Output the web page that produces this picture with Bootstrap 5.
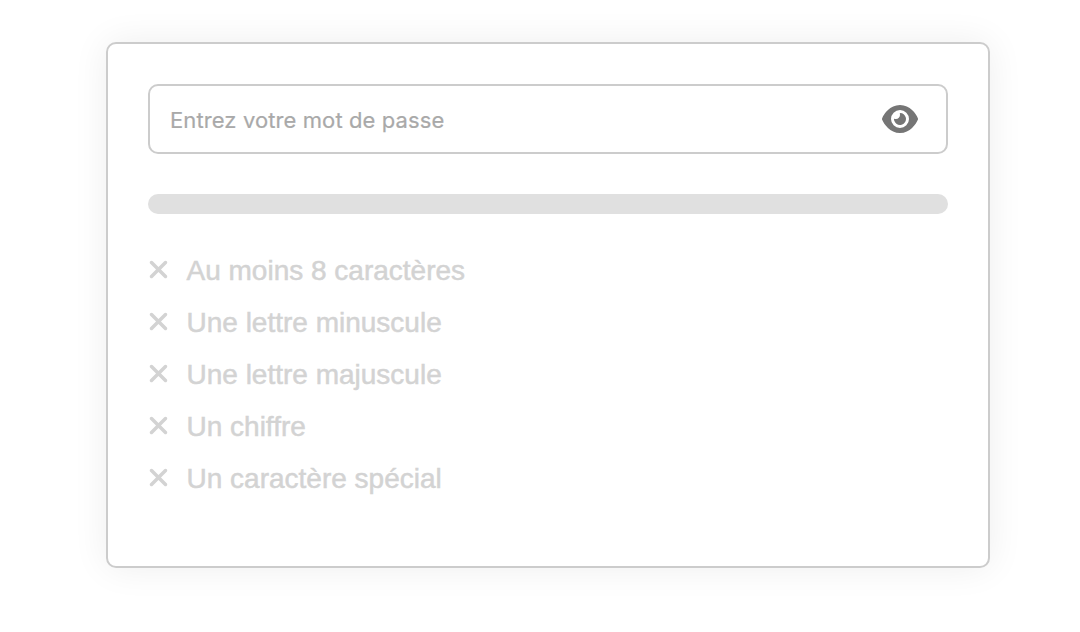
<!DOCTYPE html>
<html lang="fr">
<head>
<meta charset="utf-8">
<meta name="viewport" content="width=device-width, initial-scale=1">
<title>Mot de passe</title>
<link href="https://cdn.jsdelivr.net/npm/bootstrap@5.3.0/dist/css/bootstrap.min.css" rel="stylesheet">
<style>
  body { font-family: "Liberation Sans", Arial, sans-serif; background: #fff; }
  .pw-card { width: 884px; height: 526px; margin: 42px 0 0 106px; padding: 40px; border: 2px solid #ccc; border-radius: 10px; box-shadow: 0 0 36px rgba(0,0,0,.07); }
  .pw-field { height: 70px; border: 2px solid #ccc; border-radius: 10px; padding: 0 28px 0 20px; }
  .pw-field .form-control { font-family: Inter, sans-serif; font-size: 22px; letter-spacing: .1px; height: 66px; padding: 2px 0 0; }
  .pw-field .form-control:focus { box-shadow: none; }
  .pw-field .form-control::placeholder { color: #a9a9a9; opacity: 1; -webkit-text-stroke: .2px #a9a9a9; }
  .eye-btn { color: #757575; line-height: 0; }
  .pw-meter { height: 20px; border-radius: 10px; background: #e0e0e0; margin: 40px 0 30px; }
  .pw-rules { color: #d3d3d3; font-size: 28px; line-height: 52px; }
  .pw-rules li { height: 52px; gap: 17.5px; }
  .pw-rules span { padding-top: 2px; -webkit-text-stroke: .5px #d3d3d3; }
  .pw-rules svg { margin-top: -2px; transform: translateY(.5px); }
</style>
<script src="https://cdn.jsdelivr.net/npm/bootstrap@5.3.0/dist/js/bootstrap.bundle.min.js"></script>
</head>
<body>
<svg class="d-none">
  <symbol id="xmark" viewBox="0 0 384 512"><path fill="currentColor" d="M342.6 150.6c12.5-12.5 12.5-32.8 0-45.3s-32.8-12.5-45.3 0L192 210.7 86.6 105.4c-12.5-12.5-32.8-12.5-45.3 0s-12.5 32.8 0 45.3L146.7 256 41.4 361.4c-12.5 12.5-12.5 32.8 0 45.3s32.8 12.5 45.3 0L192 301.3 297.4 406.6c12.5 12.5 32.8 12.5 45.3 0s12.5-32.8 0-45.3L237.3 256 342.6 150.6z"/></symbol>
</svg>
<div class="min-vh-100 d-flex align-items-start">
<main class="card pw-card">
  <div class="pw-field d-flex align-items-center">
    <input class="form-control border-0 bg-transparent" type="text" placeholder="Entrez votre mot de passe" aria-label="Mot de passe">
    <button class="btn p-0 border-0 eye-btn" type="button" aria-label="Afficher">
      <svg width="36" height="32" viewBox="0 0 576 512"><path fill="currentColor" d="M288 32c-80.8 0-145.5 36.8-192.6 80.6C48.6 156 17.3 208 2.5 243.7c-3.3 7.9-3.3 16.7 0 24.6C17.3 304 48.6 356 95.4 399.4C142.5 443.2 207.2 480 288 480s145.5-36.8 192.6-80.6c46.8-43.5 78.1-95.4 93-131.1c3.3-7.9 3.3-16.7 0-24.6c-14.9-35.7-46.2-87.7-93-131.1C433.5 68.8 368.8 32 288 32zM144 256a144 144 0 1 1 288 0 144 144 0 1 1 -288 0zm144-64c0 35.3-28.7 64-64 64c-7.1 0-13.9-1.2-20.3-3.3c-5.5-1.8-11.9 1.6-11.7 7.4c.3 6.9 1.3 13.8 3.2 20.7c13.7 51.2 66.4 81.6 117.6 67.9s81.6-66.4 67.9-117.6c-11.1-41.5-47.8-69.4-88.6-71.1c-5.8-.2-9.2 6.1-7.4 11.7c2.1 6.4 3.3 13.2 3.3 20.3z"/></svg>
    </button>
  </div>
  <div class="pw-meter"></div>
  <ul class="pw-rules list-unstyled mb-0">
    <li class="d-flex align-items-center"><svg width="21" height="28"><use href="#xmark"/></svg><span>Au moins 8 caractères</span></li>
    <li class="d-flex align-items-center"><svg width="21" height="28"><use href="#xmark"/></svg><span>Une lettre minuscule</span></li>
    <li class="d-flex align-items-center"><svg width="21" height="28"><use href="#xmark"/></svg><span>Une lettre majuscule</span></li>
    <li class="d-flex align-items-center"><svg width="21" height="28"><use href="#xmark"/></svg><span>Un chiffre</span></li>
    <li class="d-flex align-items-center"><svg width="21" height="28"><use href="#xmark"/></svg><span>Un caractère spécial</span></li>
  </ul>
</main>
</div>
</body>
</html>
